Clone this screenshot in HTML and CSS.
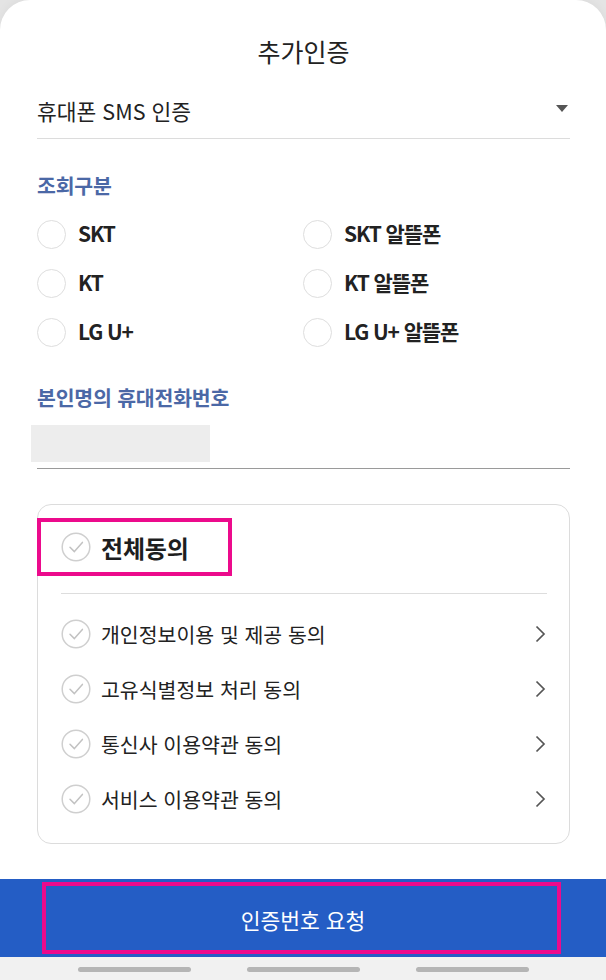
FILE: index.html
```html
<!DOCTYPE html>
<html lang="ko">
<head>
<meta charset="utf-8">
<title>추가인증</title>
<link rel="stylesheet" href="styles.css">
</head>
<body>
<div class="screen">
  <div class="sheet">
    <div class="content">
      <h1 class="title">추가인증</h1>
      <div class="select">
        <span class="select-text">휴대폰 SMS 인증</span>
        <svg class="caret" width="12" height="7" viewBox="0 0 12 7"><path d="M0 0 H12 L6 7 Z" fill="#555"/></svg>
      </div>

      <div class="label label-first">조회구분</div>
      <div class="radios">
        <div class="radio"><span class="circle"></span><span class="rtext">SKT</span></div>
        <div class="radio"><span class="circle"></span><span class="rtext">SKT 알뜰폰</span></div>
        <div class="radio"><span class="circle"></span><span class="rtext">KT</span></div>
        <div class="radio"><span class="circle"></span><span class="rtext">KT 알뜰폰</span></div>
        <div class="radio"><span class="circle"></span><span class="rtext">LG U+</span></div>
        <div class="radio"><span class="circle"></span><span class="rtext">LG U+ 알뜰폰</span></div>
      </div>

      <div class="label label-second">본인명의 휴대전화번호</div>
      <div class="phone-input"><div class="masked"></div></div>

      <div class="card">
        <div class="agree-all">
          <svg class="check" width="30" height="30" viewBox="0 0 30 30"><circle cx="15" cy="15" r="13.8" fill="none" stroke="#cfcfcf" stroke-width="1.5"/><path d="M9 15.2 L13.4 19.6 L21.4 10.4" fill="none" stroke="#c2c2c2" stroke-width="1.5" stroke-linecap="round" stroke-linejoin="round"/></svg>
          <span class="all-text">전체동의</span>
          <div class="mark mark-all"></div>
        </div>
        <div class="divider"></div>
        <ul class="items">
          <li class="item">
            <svg class="check" width="30" height="30" viewBox="0 0 30 30"><circle cx="15" cy="15" r="13.8" fill="none" stroke="#cfcfcf" stroke-width="1.5"/><path d="M9 15.2 L13.4 19.6 L21.4 10.4" fill="none" stroke="#c2c2c2" stroke-width="1.5" stroke-linecap="round" stroke-linejoin="round"/></svg>
            <span class="item-text">개인정보이용 및 제공 동의</span>
            <svg class="chev" width="11" height="18" viewBox="0 0 11 18"><path d="M1.5 1.5 L9 9 L1.5 16.5" fill="none" stroke="#555" stroke-width="1.7"/></svg>
          </li>
          <li class="item">
            <svg class="check" width="30" height="30" viewBox="0 0 30 30"><circle cx="15" cy="15" r="13.8" fill="none" stroke="#cfcfcf" stroke-width="1.5"/><path d="M9 15.2 L13.4 19.6 L21.4 10.4" fill="none" stroke="#c2c2c2" stroke-width="1.5" stroke-linecap="round" stroke-linejoin="round"/></svg>
            <span class="item-text">고유식별정보 처리 동의</span>
            <svg class="chev" width="11" height="18" viewBox="0 0 11 18"><path d="M1.5 1.5 L9 9 L1.5 16.5" fill="none" stroke="#555" stroke-width="1.7"/></svg>
          </li>
          <li class="item">
            <svg class="check" width="30" height="30" viewBox="0 0 30 30"><circle cx="15" cy="15" r="13.8" fill="none" stroke="#cfcfcf" stroke-width="1.5"/><path d="M9 15.2 L13.4 19.6 L21.4 10.4" fill="none" stroke="#c2c2c2" stroke-width="1.5" stroke-linecap="round" stroke-linejoin="round"/></svg>
            <span class="item-text">통신사 이용약관 동의</span>
            <svg class="chev" width="11" height="18" viewBox="0 0 11 18"><path d="M1.5 1.5 L9 9 L1.5 16.5" fill="none" stroke="#555" stroke-width="1.7"/></svg>
          </li>
          <li class="item">
            <svg class="check" width="30" height="30" viewBox="0 0 30 30"><circle cx="15" cy="15" r="13.8" fill="none" stroke="#cfcfcf" stroke-width="1.5"/><path d="M9 15.2 L13.4 19.6 L21.4 10.4" fill="none" stroke="#c2c2c2" stroke-width="1.5" stroke-linecap="round" stroke-linejoin="round"/></svg>
            <span class="item-text">서비스 이용약관 동의</span>
            <svg class="chev" width="11" height="18" viewBox="0 0 11 18"><path d="M1.5 1.5 L9 9 L1.5 16.5" fill="none" stroke="#555" stroke-width="1.7"/></svg>
          </li>
        </ul>
      </div>
    </div>

    <div class="cta">
      <span class="cta-text">인증번호 요청</span>
      <div class="mark mark-cta"></div>
    </div>
  </div>
  <div class="navbar">
    <span class="pill"></span>
    <span class="pill"></span>
    <span class="pill"></span>
  </div>
</div>
</body>
</html>
```

FILE: styles.css
```css
* { box-sizing: border-box; }

html, body {
  margin: 0;
  padding: 0;
}

body {
  background: #e4e4e4;
  font-family: "Noto Sans CJK KR", "Noto Sans", sans-serif;
  color: #222;
}

.screen {
  width: 606px;
  height: 980px;
  display: flex;
  flex-direction: column;
  overflow: hidden;
}

.sheet {
  flex: 1;
  background: #fff;
  border-radius: 30px 30px 0 0;
  display: flex;
  flex-direction: column;
  box-shadow: 0 -2px 10px rgba(0,0,0,0.04);
}

.content {
  padding: 0 36px 0 37px;
}

.title {
  margin: 30px 0 0;
  height: 42px;
  line-height: 42px;
  font-size: 25px;
  font-weight: 400;
  text-align: center;
  color: #222;
  letter-spacing: 0;
}

.select {
  margin-top: 10px;
  height: 57px;
  border-bottom: 1px solid #dcdcdc;
  display: flex;
  align-items: center;
  justify-content: space-between;
  padding-right: 2px;
}

.select-text {
  font-size: 21.5px;
  line-height: 28px;
  letter-spacing: 0;
  color: #222;
  padding-top: 1px;
}

.caret {
  display: block;
  margin-bottom: 4px;
}

.label {
  height: 30px;
  line-height: 30px;
  font-size: 20.5px;
  font-weight: 700;
  color: #4b68a6;
  letter-spacing: -0.2px;
}

.label-first { margin-top: 31px; }
.label-second { margin-top: 25px; }

.radios {
  margin-top: 10px;
  display: grid;
  grid-template-columns: 266px 1fr;
  grid-auto-rows: 49px;
}

.radio {
  display: flex;
  align-items: center;
}

.circle {
  width: 29px;
  height: 29px;
  border-radius: 50%;
  border: 1px solid #dedede;
  margin-right: 12px;
  flex: none;
}

.rtext {
  font-size: 21px;
  font-weight: 700;
  letter-spacing: -1.1px;
  color: #222;
  line-height: 28px;
  padding-bottom: 3px;
}

.phone-input {
  margin-top: 13px;
  height: 44px;
  border-bottom: 1px solid #9a9a9a;
}

.masked {
  width: 179px;
  height: 37px;
  margin-left: -6px;
  background: #ededed;
}

.card {
  margin-top: 35px;
  border: 1px solid #dcdcdc;
  border-radius: 14px;
  padding: 14px 22px 17px 23px;
  position: relative;
}

.agree-all {
  height: 56px;
  display: flex;
  align-items: center;
}

.check {
  display: block;
  flex: none;
  margin-right: 10px;
}

.all-text {
  font-size: 24px;
  font-weight: 700;
  letter-spacing: -0.2px;
  color: #1e1e1e;
}

.divider {
  margin-top: 18px;
  height: 1px;
  background: #dddddd;
}

.items {
  list-style: none;
  margin: 12px 0 0;
  padding: 0;
}

.item {
  height: 55px;
  display: flex;
  align-items: center;
}

.item-text {
  flex: 1;
  font-size: 20.5px;
  letter-spacing: 0;
  color: #222;
}

.chev {
  display: block;
  flex: none;
  margin-right: 1px;
}

.mark {
  position: absolute;
  border: 4px solid #ec0a8c;
  pointer-events: none;
}

.mark-all {
  left: -1px;
  top: 13px;
  width: 195px;
  height: 58px;
}

.cta {
  margin-top: 35px;
  height: 78px;
  background: #245dc5;
  display: flex;
  align-items: center;
  justify-content: center;
  position: relative;
}

.cta-text {
  color: #fff;
  font-size: 21.5px;
  letter-spacing: 0;
  padding-top: 3px;
}

.mark-cta {
  left: 42px;
  top: 3px;
  width: 519px;
  height: 72px;
}

.navbar {
  height: 23px;
  background: #f1f1f1;
  display: flex;
  justify-content: center;
  gap: 56px;
  padding-top: 10px;
}

.pill {
  width: 113px;
  height: 5px;
  border-radius: 3px;
  background: #b5b5b5;
}
```
